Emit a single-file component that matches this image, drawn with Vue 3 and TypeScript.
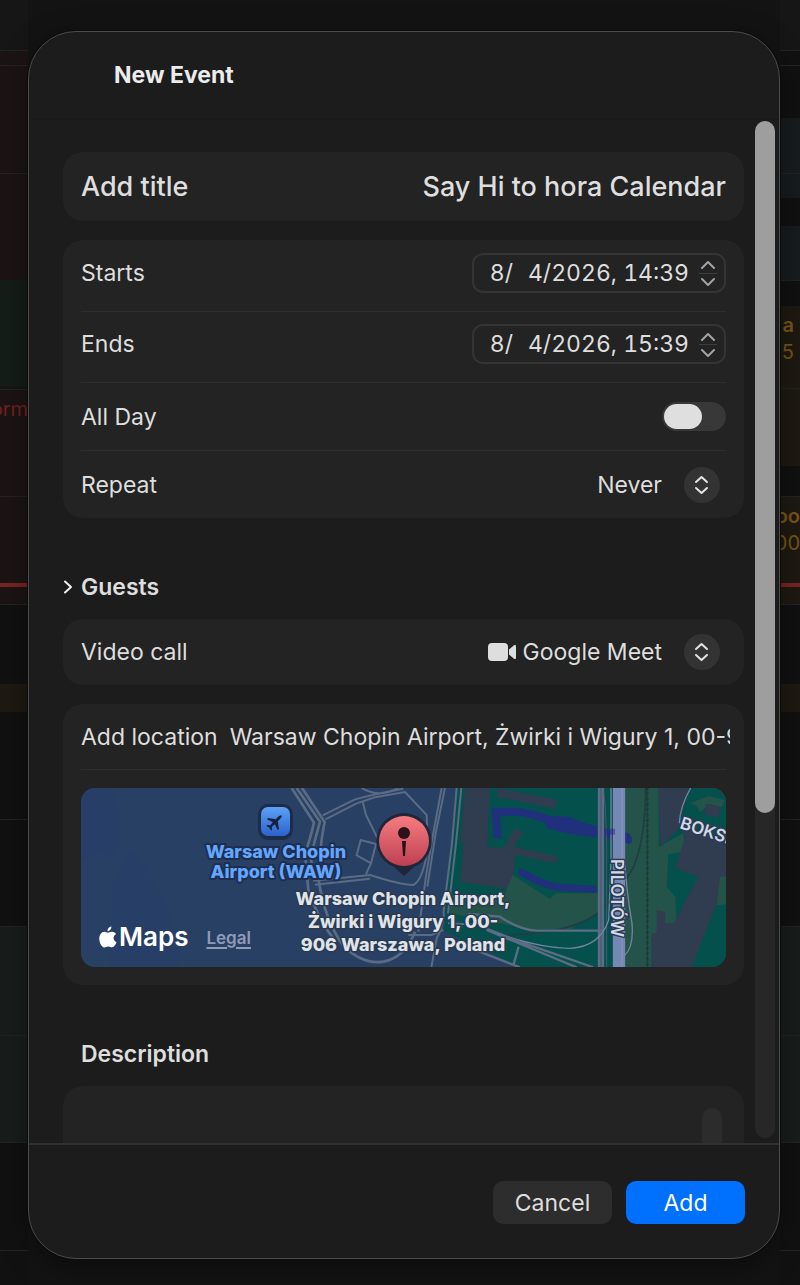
<script setup lang="ts">
import { ref } from 'vue'

interface Block {
  size: number
  tone: string
  line?: boolean
  tight?: boolean
  texts?: string[]
}

const leftLane: Block[] = [
  { size: 50, tone: 'plain' },
  { size: 15, tone: 'red', line: true },
  { size: 108, tone: 'red', line: true },
  { size: 107, tone: 'red', line: true },
  { size: 106, tone: 'green' },
  { size: 3, tone: 'plain' },
  { size: 107, tone: 'red', line: true, texts: ['orm'] },
  { size: 87, tone: 'red', line: true },
  { size: 4, tone: 'now' },
  { size: 17, tone: 'red' },
  { size: 80, tone: 'dark', line: true },
  { size: 28, tone: 'gold' },
  { size: 107, tone: 'dark' },
  { size: 107, tone: 'dark', line: true },
  { size: 109, tone: 'teal', line: true },
  { size: 107, tone: 'teal', line: true },
  { size: 108, tone: 'dark', line: true },
  { size: 35, tone: 'dark', line: true },
]

const rightLane: Block[] = [
  { size: 50, tone: 'plain' },
  { size: 15, tone: 'dark', line: true },
  { size: 53, tone: 'dark', line: true },
  { size: 55, tone: 'slate' },
  { size: 25, tone: 'slate', line: true },
  { size: 28, tone: 'dark' },
  { size: 54, tone: 'slate' },
  { size: 26, tone: 'dark', line: true },
  { size: 82, tone: 'gold', texts: ['a', '5'] },
  { size: 78, tone: 'gold', line: true },
  { size: 30, tone: 'dark' },
  { size: 87, tone: 'gold', line: true, tight: true, texts: ['oo', '00'] },
  { size: 4, tone: 'now' },
  { size: 17, tone: 'gold' },
  { size: 80, tone: 'dark', line: true },
  { size: 28, tone: 'gold' },
  { size: 107, tone: 'dark' },
  { size: 107, tone: 'dark', line: true },
  { size: 109, tone: 'teal', line: true },
  { size: 107, tone: 'teal', line: true },
  { size: 108, tone: 'dark', line: true },
  { size: 35, tone: 'dark', line: true },
]

const title = ref('Say Hi to hora Calendar')
const dates = ref([
  { id: 'starts', label: 'Starts', value: '8/\u20074/2026, 14:39' },
  { id: 'ends', label: 'Ends', value: '8/\u20074/2026, 15:39' },
])
const allDay = ref(false)
const repeat = ref('Never')
const call = ref('Google Meet')
const place = ref('Warsaw Chopin Airport, Żwirki i Wigury 1, 00-906 Warszawa, Poland')
const notes = ref('')
</script>

<template>
  <div class="page">
    <div class="lane" aria-hidden="true">
      <div v-for="(b, i) in leftLane" :key="i" class="block" :class="[b.tone, { line: b.line }]" :style="{ height: b.size + 'px' }">
        <span v-for="t in b.texts" :key="t">{{ t }}</span>
      </div>
    </div>
    <div class="lane right" aria-hidden="true">
      <div v-for="(b, i) in rightLane" :key="i" class="block" :class="[b.tone, { line: b.line, tight: b.tight }]" :style="{ height: b.size + 'px' }">
        <span v-for="t in b.texts" :key="t">{{ t }}</span>
      </div>
    </div>

    <form class="dialog" role="dialog" aria-labelledby="heading" @submit.prevent>
      <header class="header"><h1 id="heading">New Event</h1></header>

      <div class="body">
        <div class="content">
          <section class="card">
            <div class="row title-row">
              <label for="title">Add title</label>
              <input id="title" v-model="title" type="text" />
            </div>
          </section>

          <section class="card">
            <div v-for="d in dates" :key="d.id" class="row date-row">
              <label :for="d.id">{{ d.label }}</label>
              <div class="date">
                <input :id="d.id" v-model="d.value" type="text" />
                <div class="stepper">
                  <button type="button" :aria-label="d.label + ' later'">
                    <svg viewBox="0 0 18 12"><path d="M3 9 L9 3 L15 9" /></svg>
                  </button>
                  <button type="button" :aria-label="d.label + ' earlier'">
                    <svg viewBox="0 0 18 12"><path d="M3 3 L9 9 L15 3" /></svg>
                  </button>
                </div>
              </div>
            </div>
            <div class="row">
              <label for="allday">All Day</label>
              <input id="allday" v-model="allDay" class="switch" type="checkbox" role="switch" />
            </div>
            <div class="row">
              <label for="repeat">Repeat</label>
              <div class="picker">
                <select id="repeat" v-model="repeat">
                  <option>Never</option>
                  <option>Daily</option>
                </select>
                <svg class="chevrons" viewBox="0 0 36 36"><circle cx="18" cy="18" r="18" /><path d="M12 15 L17.500 10 L23 15 M12 21 L17.500 26 L23 21" /></svg>
              </div>
            </div>
          </section>

          <button class="guests" type="button" aria-expanded="false">
            <svg viewBox="0 0 10 16"><path d="M2 2.500 L8 8 L2 13.500" /></svg>
            <span>Guests</span>
          </button>

          <section class="card">
            <div class="row">
              <label for="call">Video call</label>
              <div class="picker">
                <svg class="camera" viewBox="0 0 30 20"><rect x="1" y="1" width="20" height="18" rx="4" /><path d="M22 7.500 L27 3.200 Q29 2 29 4.500 V15.500 Q29 18 27 16.800 L22 12.500Z" /></svg>
                <select id="call" v-model="call">
                  <option>Google Meet</option>
                  <option>None</option>
                </select>
                <svg class="chevrons" viewBox="0 0 36 36"><circle cx="18" cy="18" r="18" /><path d="M12 15 L17.500 10 L23 15 M12 21 L17.500 26 L23 21" /></svg>
              </div>
            </div>
          </section>

          <section class="card">
            <div class="row place-row">
              <label for="place">Add location</label>
              <input id="place" v-model="place" type="text" />
            </div>
            <div class="map-wrap">
              <div class="map">
                <svg viewBox="0 0 645 179" preserveAspectRatio="xMidYMid slice" role="img" aria-label="Map of Warsaw Chopin Airport">
                  <defs>
                    <linearGradient id="pin" x1="0" y1="0" x2="0" y2="1"><stop offset="0" stop-color="#f67c80" /><stop offset="1" stop-color="#bd4052" /></linearGradient>
                    <linearGradient id="poi" x1="0" y1="0" x2="0" y2="1"><stop offset="0" stop-color="#5ca2f6" /><stop offset="1" stop-color="#2b62cb" /></linearGradient>
                  </defs>
                  <rect width="645" height="179" fill="#294065" />
                  <g transform="translate(-11 -8) scale(.33333)">
                    <path d="M33 24 H120 Q160 110 150 190 L120 240 Q100 200 60 230 L33 240Z M190 210 Q250 300 290 380 Q320 460 330 560 H120 Q130 420 130 300Z" fill="#273e67" />
                    <g transform="translate(660 0)">
                      <path d="M500 24 H1310 V562 H690 L560 500 L462 452 L478 240Z" fill="#04504c" />
                      <path d="M525 24 H600 L592 200 L640 205 L675 144 L700 156 L672 200 L806 230 L796 250 L676 224 L665 328 L512 306 L520 190 L510 190Z M624 24 L802 60 L796 86 L620 50Z" fill="#303c4f" />
                      <path d="M668 285 L780 357 L796 340 H925 V400 L840 448 H720 L480 400 L476 345 L640 350Z" fill="#24534a" />
                    </g>
                    <g transform="translate(1290 0)">
                      <path d="M374 24 H476 V200 L550 160 L556 215 L505 222 L500 320 L526 350 L530 430 L455 470 V562 H374Z" fill="#24534a" />
                      <path d="M475 24 H570 L540 120 L690 200 V290 L650 370 L575 562 H455 V460 H470 V390 L496 396 V430 H522 L595 290 L525 265 L556 170 L540 140 L482 202Z" fill="#303c4f" />
                      <path d="M660 290 H690 V372 L650 376Z" fill="#24534a" />
                      <path d="M570 70 L625 48 L675 60 L665 82 L628 72 L600 96 L590 78Z" fill="#24534a" />
                      <path d="M618 72 L662 80 L656 112 L614 104Z" fill="#303c4f" />
                      <path d="M-7 175 L-12 95 H50 Q90 98 140 118" fill="none" stroke="#20307d" stroke-width="24" />
                      <path d="M130 106 L210 112 Q260 135 330 148 L386 160 Q402 176 392 192 L310 174 Q220 168 140 145Z" fill="#20307d" />
                      <path d="M65 277 Q130 318 180 322 L280 328" fill="none" stroke="#20307d" stroke-width="21" stroke-linecap="round" stroke-linejoin="round" />
                    </g>
                    <g transform="translate(1290 0)" fill="none">
                      <path d="M437 24 Q436 180 400 262 Q340 365 290 402 Q200 465 0 465 M442 24 V562" stroke="#1f3e40" stroke-width="5" />
                      <path d="M442 24 V562" stroke="#16302f" stroke-width="9" stroke-dasharray="2 14" />
                      <path d="M303 24 V562" stroke="#5c6c85" stroke-width="19" />
                      <path d="M303 24 V562" stroke="#36495f" stroke-width="2" />
                      <path d="M312 40 Q322 130 320 290 V562" stroke="#455871" stroke-width="3" />
                      <path d="M-95 402 L0 410 Q60 450 110 452 H310 M-40 450 L230 562 M30 475 L280 562 M56 500 L40 556 M-100 500 L60 562" stroke="#5c6c85" stroke-width="7" />
                      <path d="M333 24 V240 L326 420 Q300 500 210 505 Q120 504 -10 460 M370 190 Q378 330 396 430 Q402 500 374 526 M572 24 Q540 80 538 130" stroke="#7384a0" stroke-width="4" />
                      <path d="M357 24 V562" stroke="#7587b3" stroke-width="37" />
                      <path d="M366 24 V562" stroke="#8997bd" stroke-width="3" />
                      <path d="M318 155 H345" stroke="#20307d" stroke-width="18" opacity=".5" />
                    </g>
                    <g transform="translate(660 0)" fill="none" stroke="#5a6b84" stroke-width="6">
                      <path d="M5 24 L72 128 Q60 180 45 220 L55 330 Q85 420 135 482 M20 24 L90 125 Q75 180 62 230 L72 300 M36 24 L104 126 Q90 190 86 300 Q104 420 160 498 Q220 555 280 545 Q345 532 375 455" stroke-width="8" />
                      <path d="M98 106 L195 58 L250 44 L340 26 M106 118 L200 70 L255 52 L345 36 L410 105 L414 200 Q400 300 370 315 Q330 314 240 285 L70 302 M75 314 L240 296 M215 24 Q265 55 325 24 M218 65 L228 105 L266 182 M212 180 L258 192 L243 250 L200 226Z M243 250 L228 282" />
                      <path d="M455 24 L428 170 Q405 300 400 350 L385 455 M465 24 L437 160 L412 320 M500 24 L486 190 L460 400 M514 24 L498 190 L474 400 M462 400 Q456 450 440 475 L424 562 M355 465 H425 L460 450 M474 430 L560 434 L730 500" />
                    </g>
                  </g>
                  <g class="road-name">
                    <text transform="translate(530 71) rotate(90)">PILOTÓW</text>
                    <text transform="translate(598 40) rotate(18)">BOKSERSKA</text>
                  </g>
                  <rect x="177" y="16" width="35" height="36" rx="10" fill="#1d2c4a" />
                  <rect x="180" y="19" width="29" height="29" rx="7" fill="url(#poi)" />
                  <path transform="translate(194 34) rotate(45) scale(.85)" d="M0 -11 Q1.700 -10.500 1.700 -7 V-3 L9 2.500 V4.500 L1.700 2 L1.300 6.500 L4 9 V10.500 L0 9.400 L-4 10.500 V9 L-1.300 6.500 L-1.700 2 L-9 4.500 V2.500 L-1.700 -3 V-7 Q-1.700 -10.500 0 -11Z" fill="#14233f" />
                  <g class="poi-name">
                    <text x="195" y="70">Warsaw Chopin</text>
                    <text x="195" y="90">Airport (WAW)</text>
                  </g>
                  <path d="M323 25 A28 28 0 0 1 333 79 L323 88 L313 79 A28 28 0 0 1 323 25Z" fill="#20263a" />
                  <circle cx="323" cy="53" r="25" fill="url(#pin)" />
                  <circle cx="323" cy="45" r="6" fill="#2c1118" />
                  <path d="M321 53 H325 L324 68 H322Z" fill="#2c1118" />
                  <g class="pin-name">
                    <text x="322" y="117">Warsaw Chopin Airport,</text>
                    <text x="322" y="140">Żwirki i Wigury 1, 00-</text>
                    <text x="322" y="163">906 Warszawa, Poland</text>
                  </g>
                </svg>
                <div class="credit">
                  <svg viewBox="0 0 18 22"><path d="M12.400 0.500 C12.600 3 10.600 5.300 8.500 5.200 C8.300 2.900 10.200 .800 12.400 .500Z M8.800 6.700 C9.900 6.700 11 5.600 13 5.700 C15 5.800 16.300 6.700 17 7.900 C13.400 10 14 14.700 17.600 16.100 C16.600 18.700 15.100 21.300 13.300 21.300 C11.700 21.300 11.200 20.400 9.300 20.400 C7.300 20.400 6.700 21.300 5.300 21.400 C2.700 21.400 .300 16.800 .300 12.800 C.300 8.500 2.700 5.900 5.200 5.800 C6.800 5.800 8 6.700 8.800 6.700Z" /></svg>
                  <span>Maps</span>
                  <a href="#legal">Legal</a>
                </div>
              </div>
            </div>
          </section>

          <label class="notes-label" for="notes">Description</label>
          <section class="card notes">
            <textarea id="notes" v-model="notes"></textarea>
            <div class="notes-track"></div>
          </section>
        </div>
        <div class="track"><div class="thumb"></div></div>
      </div>

      <footer class="footer">
        <button class="action" type="button">Cancel</button>
        <button class="action primary" type="submit">Add</button>
      </footer>
    </form>
  </div>
</template>

<style>
body {
  margin: 0;
  background: #131313;
}
</style>

<style scoped>
* {
  box-sizing: border-box;
}

.page {
  display: grid;
  grid-template-columns: 28px 1fr 20px;
  grid-template-rows: 100vh;
  overflow: hidden;
  background: #131313;
  color: #dedede;
  font: 400 23px/28px Inter, "Noto Sans", sans-serif;
}

.lane {
  grid-area: 1 / 1;
  overflow: hidden;
  min-width: 0;
}

.lane.right {
  grid-column: 3;
}

.block {
  display: flex;
  flex-direction: column;
  align-items: flex-end;
  font-size: 20px;
  line-height: 27px;
  overflow: hidden;
  white-space: nowrap;
}

.right .block {
  padding-right: 6px;
}

.right .tight {
  padding-right: 0;
}

.block.line {
  border-top: 1px solid #242424;
}

.block span:first-child {
  padding-top: 6px;
}

.right .block span:first-child {
  font-weight: 600;
}

.plain { background: #161616; }
.dark { background: #111111; }
.red { background: #1c1414; color: #722020; }
.green { background: #141d18; }
.gold { background: #1e1a12; color: #795517; }
.slate { background: #171c1e; }
.teal { background: #181d1c; }
.now { background: #7b2424; }

.dialog {
  grid-area: 1 / 2;
  z-index: 1;
  display: flex;
  flex-direction: column;
  margin: 31px 0 26px;
  overflow: hidden;
  border: 1px solid #4b4b4b;
  border-radius: 48px;
  background: #1c1c1c;
  box-shadow: 0 0 0 1px #0c0c0c, 0 8px 30px rgba(0, 0, 0, 0.4);
}

.header {
  padding: 29px 85px 30px;
  border-bottom: 1px solid #191919;
}

h1 {
  margin: 0;
  font-size: 23px;
  font-weight: 700;
  line-height: 28px;
  color: #ececec;
}

.body {
  display: flex;
  flex: 1;
  gap: 11px;
  min-height: 0;
  padding: 0 4px 0 34px;
}

.content {
  flex: 1;
  min-width: 0;
  padding-top: 32px;
  overflow: hidden;
}

.track {
  width: 20px;
  margin: 1px 0 5px;
  border-radius: 10px;
  background: #272727;
}

.thumb {
  height: 68%;
  border-radius: 10px;
  background: #9e9e9e;
}

.card {
  margin-bottom: 19px;
  padding: 0 18px;
  border-radius: 20px;
  background: #232323;
}

.row {
  display: flex;
  align-items: center;
  justify-content: space-between;
  min-height: 66px;
}

.row + .row {
  min-height: 68px;
  border-top: 1px solid #2e2e2e;
}

.row.date-row {
  min-height: 71px;
}

label {
  flex: none;
}

input,
select,
textarea,
button {
  margin: 0;
  padding: 0;
  border: 0;
  outline: 0;
  background: none;
  color: inherit;
  font: inherit;
}

.row.title-row {
  gap: 20px;
  min-height: 69px;
  font-size: 27px;
  font-weight: 500;
  line-height: 34px;
}

.title-row input {
  flex: 1;
  min-width: 0;
  text-align: right;
}

.date {
  display: flex;
  align-items: center;
  gap: 10px;
  width: 254px;
  height: 40px;
  margin-bottom: 6px;
  padding-right: 7px;
  border: 2px solid #343434;
  border-radius: 11px;
}

.date-row label {
  margin-bottom: 6px;
}

.date input {
  flex: 1;
  min-width: 0;
  text-align: right;
  font-variant-numeric: tabular-nums;
}

.stepper {
  display: flex;
  flex-direction: column;
  width: 18px;
}

.stepper button {
  height: 15px;
}

.stepper button + button {
  border-top: 1px solid #3d3d3d;
}

.stepper svg {
  display: block;
  width: 18px;
  height: 12px;
}

.stepper button + button svg {
  margin-top: 2px;
}

.stepper path,
.chevrons path,
.guests path {
  fill: none;
  stroke: #a3a3a3;
  stroke-width: 2;
  stroke-linecap: round;
  stroke-linejoin: round;
}

.switch {
  appearance: none;
  display: flex;
  width: 64px;
  height: 29px;
  padding: 2px;
  border-radius: 15px;
  background: #383838;
}

.switch::before {
  content: "";
  width: 38px;
  border-radius: 13px;
  background: #dfdfdf;
}

.switch:checked {
  justify-content: flex-end;
  background: #0070ff;
}

.picker {
  display: flex;
  align-items: center;
  padding-right: 6px;
}

select {
  appearance: none;
  text-align-last: right;
}

.chevrons {
  width: 36px;
  height: 36px;
  margin-left: 22px;
}

.chevrons circle {
  fill: #333333;
}

.chevrons path {
  stroke: #e4e4e4;
  stroke-width: 2;
}

.camera {
  width: 30px;
  height: 20px;
  margin-right: 5px;
  fill: #dedede;
}

.guests {
  display: flex;
  align-items: center;
  gap: 8px;
  margin: 55px 0 18px;
  font-weight: 600;
}

.guests svg {
  width: 10px;
  height: 16px;
}

.guests path {
  stroke: #f0f0f0;
  stroke-width: 2;
}

.row.place-row {
  gap: 12px;
  min-height: 65px;
  margin-right: -4px;
}

.place-row input {
  flex: 1;
  min-width: 0;
}

.map-wrap {
  padding: 18px 0;
  border-top: 1px solid #2e2e2e;
}

.map {
  position: relative;
  height: 179px;
  overflow: hidden;
  border-radius: 14px;
}

.map > svg {
  display: block;
  width: 100%;
  height: 100%;
}

.map text {
  font-family: Inter, "Noto Sans", sans-serif;
  paint-order: stroke;
  stroke-linejoin: round;
}

.road-name {
  font-size: 17px;
  font-weight: 600;
  fill: #d3d9e4;
  stroke: #2b3a55;
  stroke-width: 3px;
}

.poi-name {
  font-size: 18px;
  font-weight: 800;
  text-anchor: middle;
  fill: #64a6fc;
  stroke: #1d2e50;
  stroke-width: 4px;
}

.pin-name {
  font-size: 18px;
  font-weight: 800;
  text-anchor: middle;
  fill: #dfe4e9;
  stroke: #2a3950;
  stroke-width: 3px;
}

.credit {
  position: absolute;
  bottom: 12px;
  left: 18px;
  display: flex;
  align-items: center;
  color: #ffffff;
  font-size: 26px;
  font-weight: 600;
  line-height: 34px;
}

.credit svg {
  width: 18px;
  height: 22px;
  margin-right: 2px;
  fill: #ffffff;
}

.credit a {
  margin-left: 18px;
  padding-top: 2px;
  color: #8e9bb5;
  font-size: 17px;
  text-decoration-thickness: 2px;
  text-underline-offset: 3px;
}

.notes-label {
  display: block;
  margin: 55px 18px 18px;
  font-weight: 600;
}

.notes {
  display: flex;
  height: 200px;
  padding: 22px;
}

.notes textarea {
  flex: 1;
  resize: none;
}

.notes-track {
  width: 20px;
  border-radius: 10px;
  background: #2c2c2c;
}

.footer {
  display: flex;
  justify-content: flex-end;
  gap: 14px;
  padding: 36px 34px 34px;
  border-top: 2px solid #303030;
}

.action {
  width: 119px;
  height: 43px;
  border-radius: 10px;
  background: #2d2d2d;
}

.primary {
  background: #0070ff;
  color: #ffffff;
}
</style>
